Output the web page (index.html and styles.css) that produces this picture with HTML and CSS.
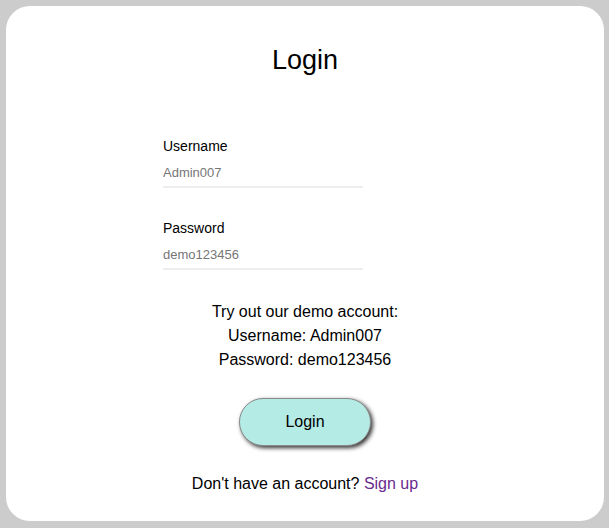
FILE: index.html
```html
<!DOCTYPE html>
<html>
<head>
<meta charset="utf-8">
<link rel="stylesheet" href="styles.css">
</head>
<body>
<div class="card">
  <h1 class="title">Login</h1>
  <form class="form">
    <div class="field">
      <label class="label" for="u">Username</label>
      <input class="input" id="u" type="text" placeholder="Admin007">
    </div>
    <div class="field">
      <label class="label" for="p">Password</label>
      <input class="input" id="p" type="password" placeholder="demo123456">
    </div>
  </form>
  <div class="demo">
    <div>Try out our demo account:</div>
    <div>Username: Admin007</div>
    <div>Password: demo123456</div>
  </div>
  <button class="btn" type="button">Login</button>
  <p class="signup">Don't have an account? <a class="link" href="#">Sign up</a></p>
</div>
</body>
</html>
```
FILE: styles.css
```css
html, body {
  margin: 0;
  padding: 0;
}
body {
  background: #cccccc;
  font-family: "Liberation Sans", Arial, sans-serif;
  color: #111;
  padding: 6px 5px 7px 6px;
  height: 528px;
  box-sizing: border-box;
}
.card {
  background: #fff;
  border-radius: 24px;
  height: 515px;
  box-sizing: border-box;
  padding-top: 38px;
  display: flex;
  flex-direction: column;
  align-items: center;
}
.title {
  margin: 0;
  font-size: 27px;
  font-weight: normal;
  line-height: 32px;
  color: #000;
}
.form {
  margin-top: 62px;
  width: 284px;
  display: flex;
  flex-direction: column;
  gap: 32px;
}
.field {
  display: flex;
  flex-direction: column;
  width: 200px;
}
.label {
  font-size: 14px;
  line-height: 16px;
  color: #000;
}
.input {
  margin-top: 4px;
  height: 30px;
  box-sizing: border-box;
  border: none;
  border-bottom: 2px solid #eeeeee;
  padding: 0;
  font-family: "Liberation Sans", Arial, sans-serif;
  font-size: 13px;
  outline: none;
  background: transparent;
}
.input::placeholder {
  color: #767676;
}
.demo {
  margin-top: 30px;
  font-size: 16px;
  line-height: 24px;
  text-align: center;
  color: #000;
}
.btn {
  margin-top: 26px;
  width: 132px;
  height: 48px;
  border-radius: 24px;
  border: 1px solid #8a8a8a;
  background: #b4ebe5;
  box-shadow: 2px 2px 4px #333;
  font-family: "Liberation Sans", Arial, sans-serif;
  font-size: 16px;
  color: #000;
  cursor: pointer;
}
.signup {
  margin: 26px 0 0;
  font-size: 16px;
  line-height: 24px;
  color: #000;
}
.link {
  color: #6a2a8f;
  text-decoration: none;
}
```
